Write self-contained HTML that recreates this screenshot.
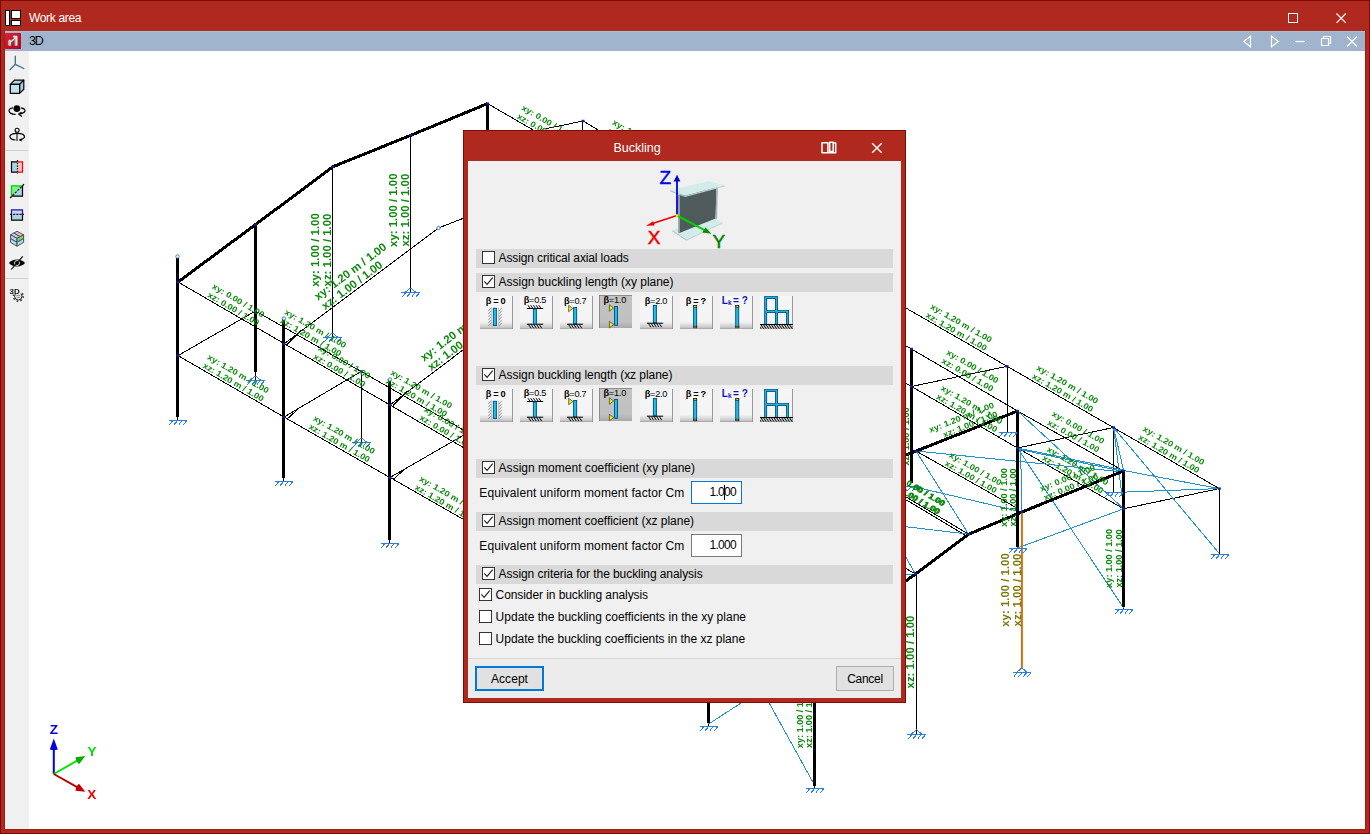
<!DOCTYPE html>
<html>
<head>
<meta charset="utf-8">
<title>Work area</title>
<style>
html,body{margin:0;padding:0;}
body{width:1370px;height:834px;position:relative;overflow:hidden;background:#b0291e;font-family:"Liberation Sans",sans-serif;font-size:12px;color:#000;}
.abs{position:absolute;}
#topedge{left:0;top:0;width:1370px;height:1px;background:#7a0c06;}
#title{left:29px;top:10px;color:#fff;font-size:12px;line-height:16px;white-space:nowrap;letter-spacing:-0.33px;}
#subbar{left:5px;top:31px;width:1360px;height:20px;background:#a0b5cd;}
#subbar .t{left:24px;top:3px;font-size:12.5px;line-height:14px;letter-spacing:-1.2px;}
#tool{left:5px;top:51px;width:24px;height:778px;background:#f0f0f0;}
#view{left:29px;top:51px;width:1336px;height:778px;background:#fff;overflow:hidden;}
#scene{left:0;top:0;will-change:transform;}
#dlg{left:463px;top:130px;width:443px;height:573px;background:#b0291f;box-sizing:border-box;border:1px solid #7e0c05;}
#dlgbody{left:468px;top:161px;width:433px;height:537px;background:#f0f0f0;}
#dlgtitle{left:463px;top:140px;width:348px;text-align:center;color:#fff;font-size:12.5px;line-height:16px;}
.band{left:8px;width:417px;height:19px;background:#d9d9d9;}
.cb{width:11px;height:11px;border:1px solid #333;background:#fff;}
.lbl{font-size:12px;line-height:15px;white-space:nowrap;color:#000;}
.inp{width:49px;height:21px;background:#fff;border:1px solid #7a7a7a;font-size:12px;line-height:21px;text-align:right;}
.btn{width:56px;height:23px;background:#e1e1e1;border:1px solid #adadad;font-size:12px;line-height:24px;text-align:center;}
</style>
</head>
<body>
<div class="abs" style="left:0;top:0;width:1370px;height:834px;box-sizing:border-box;border:1px solid #7d0400;border-top-color:#800a04"></div>
<div class="abs" style="left:4px;top:30px;width:1362px;height:800px;box-sizing:border-box;border:1px solid #a9190d;border-top-color:#b0291e"></div>
<!-- app icon -->
<svg class="abs" style="left:5px;top:9px" width="18" height="18" viewBox="0 0 18 18">
  <rect x="0.5" y="1.5" width="4" height="15" fill="#fff" stroke="#000"/>
  <rect x="6.500" y="1.500" width="9" height="8" fill="#fff" stroke="#000"/>
  <rect x="6.500" y="11.500" width="9" height="5" fill="#fff" stroke="#000"/>
</svg>
<div class="abs" id="title">Work area</div>
<!-- window buttons -->
<svg class="abs" style="left:1280px;top:8px" width="80" height="20" viewBox="0 0 80 20">
  <rect x="8.500" y="5.500" width="9" height="9" fill="none" stroke="#fff" stroke-width="1"/>
  <path d="M56.500 5.500L65.800 14.800M65.800 5.500L56.500 14.800" stroke="#fff" stroke-width="1.200" fill="none"/>
</svg>
<div class="abs" id="subbar">
  <div class="abs" style="left:0;top:0;width:1360px;height:1px;background:#a4c4de"></div>
  <div class="abs" style="left:0;top:19px;width:1360px;height:1px;background:#9db1cc"></div>
  <svg class="abs" style="left:0;top:2px" width="16" height="16" viewBox="0 0 16 16">
    <defs><linearGradient id="rg" x1="0" y1="0" x2="1" y2="1"><stop offset="0" stop-color="#d8243a"/><stop offset="0.500" stop-color="#cc1028"/><stop offset="1" stop-color="#a80c1e"/></linearGradient></defs>
    <rect x="0" y="0" width="16" height="16" rx="0.800" fill="url(#rg)"/>
    <path d="M3.400 7.400L4.800 6.400L6 7.600L9.200 5L7.600 3.200L9.600 2.200L10.400 3L11.800 2.600L12.600 3.400V12.400L10.600 13L9.800 12V6.400L6 9.400V12.400L4.600 13L3.200 11.800Z" fill="#e6e6e2" stroke="#8a8f8c" stroke-width="0.500"/>
    <path d="M9.800 6.400V12L10.600 13V5.600Z" fill="#a9aeab"/>
    <path d="M3.400 7.400L3.200 11.800L4.600 13V8.400Z" fill="#b4b8b5"/>
  </svg>
  <div class="abs t">3D</div>
  <svg class="abs" style="left:1230px;top:0" width="130" height="20" viewBox="1235 31 130 20" fill="none" stroke="#fff" stroke-width="1.200">
    <path d="M1250.500 36.300V46.700L1243.700 41.500Z"/>
    <path d="M1271.500 36.300V46.700L1278.300 41.500Z"/>
    <path d="M1295 41.500H1305"/>
    <path d="M1321.500 38.500H1328.500V45.500H1321.500ZM1323.500 38.500V36.500H1330.500V43.500H1328.500"/>
    <path d="M1347 36.500L1357 46.500M1357 36.500L1347 46.500"/>
  </svg>
</div>
<div class="abs" id="tool">
<svg class="abs" style="left:0;top:0;will-change:transform" width="24" height="260" viewBox="5 51 24 260">
<path d="M15.300 56.200V64.300L10 69.700M15.300 64.300L23.800 68.500" fill="none" stroke="#3e6f8b" stroke-width="1.300" stroke-linecap="round"/>
<g stroke="#000" stroke-width="1.200" stroke-linejoin="round">
<path d="M10.300 84.400L14.500 80.200H23.800L19.600 84.400Z" fill="#a9d6ea"/>
<path d="M19.600 84.400L23.800 80.200V89.300L19.600 93.400Z" fill="#9fd0e6"/>
<rect x="10.300" y="84.400" width="9.300" height="9" fill="#bfe0ec"/>
</g>
<path d="M13 107.900C10.500 108.300 9 109.600 9.100 110.900C9.300 113 12.500 114.300 15.700 114.500M21.100 107.900C23.500 108.400 25 109.600 25 110.900C24.900 112.600 22 113.600 18.400 114M18.400 114L21.600 112.200M18.400 114L22 116.600" fill="none" stroke="#000" stroke-width="1.200"/>
<circle cx="16.900" cy="108.600" r="3.400" fill="#000"/>
<circle cx="17.100" cy="130.300" r="2" fill="none" stroke="#000" stroke-width="1.100"/>
<line x1="17" y1="132.500" x2="17" y2="141" stroke="#555" stroke-width="1.600"/>
<path d="M19.500 139.900C27 138.800 26 133.300 17 133.300C8 133.300 7.500 139.300 15.500 140" fill="none" stroke="#000" stroke-width="1.200"/>
<path d="M18.800 139.900L21.600 138.200V141.400Z" fill="#000"/>
<line x1="5" y1="150.500" x2="28" y2="150.500" stroke="#cfcfcf" stroke-width="1"/>
<rect x="11.500" y="161.800" width="5.800" height="10.400" fill="#a8d4e8"/>
<rect x="17.500" y="161.800" width="5" height="10.400" fill="#ffc0c0"/>
<path d="M17.500 161.800H11.500V172.200H17.500" fill="none" stroke="#000" stroke-width="1.200"/>
<path d="M17.500 161.800H22.500V172.200H17.500" fill="none" stroke="#f00" stroke-width="1.200"/>
<line x1="17.500" y1="160" x2="17.500" y2="174" stroke="#000" stroke-width="1.200" stroke-dasharray="1.500 1.200"/>
<path d="M11.500 196.200V185.800H22.500Z" fill="#7ff08a"/>
<path d="M11.500 196.200H22.500V185.800Z" fill="#a8d4e8"/>
<path d="M11.500 196.200V185.800H22.500" fill="none" stroke="#00d000" stroke-width="1.200"/>
<path d="M11.500 196.200H22.500V185.800" fill="none" stroke="#000" stroke-width="1.200"/>
<line x1="10" y1="198" x2="24" y2="184.300" stroke="#000" stroke-width="1.200" stroke-dasharray="2.200 1.300"/>
<rect x="11.500" y="209.800" width="10.800" height="4.600" fill="#d2ccff"/>
<rect x="11.500" y="214.400" width="10.800" height="5.800" fill="#a8d4e8"/>
<path d="M11.500 214.400V209.800H22.500V214.400" fill="none" stroke="#1a1aa0" stroke-width="1.200"/>
<path d="M11.500 214.400V220.200H22.500V214.400" fill="none" stroke="#000" stroke-width="1.200"/>
<line x1="10" y1="214.400" x2="24" y2="214.400" stroke="#000" stroke-width="1.200" stroke-dasharray="2 1.200"/>
<g stroke="#3c464e" stroke-width="0.900" stroke-linejoin="round">
<path d="M13.750 233.050L20.300 236.600L17 238.400L10.500 234.800Z" fill="#a9dcee"/>
<path d="M17 231.300L23.600 234.800L20.300 236.600L13.750 233.050Z" fill="#f6b4bc"/>
<path d="M10.500 234.800V238.600L17 242.300V238.400Z" fill="#cfc6f2"/>
<path d="M17 238.400V242.300L23.600 238.600V234.800Z" fill="#7fd468"/>
<path d="M10.500 238.600V242.400L17 246.200V242.300Z" fill="#a9dcee"/>
<path d="M17 242.300V246.200L23.600 242.400V238.600Z" fill="#a9dcee"/>
</g>
<path d="M9 263C12 258.200 21.800 258.200 25 263C21.800 267.600 12 267.600 9 263Z" fill="#000"/>
<circle cx="17" cy="263" r="2.500" fill="none" stroke="#f0f0f0" stroke-width="0.900"/>
<line x1="11.200" y1="269.500" x2="22.800" y2="256.400" stroke="#000" stroke-width="1.100"/>
<line x1="5" y1="278.500" x2="28" y2="278.500" stroke="#cfcfcf" stroke-width="1"/>
<text x="9.600" y="293.600" font-family="Liberation Sans, sans-serif" font-weight="bold" font-size="8" fill="#111">3D</text>
<clipPath id="gc"><path d="M5 294.200H20.800V288H29V306H5Z"/></clipPath>
<g clip-path="url(#gc)" fill="none" stroke="#222">
<circle cx="18.300" cy="296.300" r="3.700" stroke-width="1"/>
<circle cx="18.300" cy="296.300" r="4.900" stroke-width="1.500" stroke-dasharray="1.500 2.350"/>
</g>
<path d="M16.300 296L18.300 295.200L20.400 296M16.800 297.400H19.800" fill="none" stroke="#666" stroke-width="0.800"/>
</svg>

</div>
<div class="abs" id="view">
<svg class="abs" id="scene" width="1336" height="778" viewBox="29 51 1336 778">
<g fill="none" stroke="#000" stroke-width="1" shape-rendering="crispEdges">
<polyline points="178.0,282.0 470.0,451.4"/>
<polyline points="255.5,311.0 470.0,433.8"/>
<polyline points="178.0,355.6 284.0,417.0 390.0,477.5 470.0,523.2"/>
<polyline points="178.0,355.6 255.5,311.0"/>
<polyline points="284.0,417.0 361.3,371.4"/>
<polyline points="390.0,477.5 470.0,431.5"/>
<polyline points="284.0,344.0 438.5,228.0 470.0,215.7"/>
<polyline points="390.0,405.0 470.0,344.7"/>
<polyline points="332.5,167.0 332.5,337.0"/>
<polyline points="410.5,135.0 410.5,292.0"/>
<polyline points="361.5,371.4 361.5,442.0"/>
<polyline points="255.5,372.0 255.5,380.0"/>
<polyline points="177.5,417.0 177.5,420.5"/>
<polyline points="283.5,478.0 283.5,481.5"/>
<polyline points="389.5,540.0 389.5,543.5"/>
<polyline points="487.6,103.6 540.0,134.0"/>
<polyline points="545.6,128.8 583.0,121.0 600.0,131.0"/>
<polyline points="582.5,121.0 582.5,132.0"/>
<polyline points="900.0,304.6 1219.3,488.6"/>
<polyline points="900.0,342.3 911.5,349.0 1017.5,411.0 1123.6,471.0"/>
<polyline points="900.0,379.8 911.5,386.5 1017.5,448.0 1123.6,508.8"/>
<polyline points="911.5,386.5 1007.0,366.3"/>
<polyline points="1007.5,366.3 1007.5,432.5"/>
<polyline points="1017.5,448.0 1113.6,427.5"/>
<polyline points="1113.5,427.5 1113.5,492.5"/>
<polyline points="1123.6,508.8 1219.3,488.6"/>
<polyline points="1219.5,488.6 1219.5,554.4"/>
<polyline points="916.0,451.0 1017.5,508.4"/>
<polyline points="900.0,493.4 968.6,534.2"/>
<polyline points="900.0,496.2 966.0,535.6"/>
<polyline points="916.5,575.0 916.5,734.0"/>
<polyline points="393.0,405.7 407.0,391.7"/>
<polyline points="287.0,344.7 301.0,330.7"/>
<polyline points="287.3,418.8 298.0,409.3"/>
<polyline points="393.3,479.3 404.0,469.8"/>
<polyline points="900.0,565.0 915.4,574.0"/>
<polyline points="1017.5,546.5 1017.5,548.7"/>
<polyline points="1123.5,607.0 1123.5,609.5"/>
<polyline points="708.5,723.0 708.5,726.5"/>
<polyline points="814.5,785.0 814.5,788.4"/>
</g>
<g fill="none" stroke="#1d93d2" stroke-width="1" shape-rendering="crispEdges">
<polyline points="916.0,451.0 1123.6,472.0"/>
<polyline points="916.0,451.0 968.6,534.2"/>
<polyline points="1017.5,411.0 1123.6,508.8"/>
<polyline points="1017.5,448.0 1123.6,470.0"/>
<polyline points="1017.5,449.0 1123.6,471.5"/>
<polyline points="1017.5,448.0 1123.6,608.0"/>
<polyline points="1020.6,448.0 1021.9,512.0"/>
<polyline points="1113.6,427.5 1123.6,470.5"/>
<polyline points="1113.6,427.5 1123.6,508.8"/>
<polyline points="1113.6,427.5 1219.3,553.5"/>
<polyline points="1123.6,470.5 1219.3,488.6"/>
<polyline points="1219.3,488.6 1113.8,492.5"/>
<polyline points="1123.6,508.8 1017.5,548.0"/>
<polyline points="911.0,486.0 1017.5,511.0"/>
<polyline points="900.0,526.0 968.6,534.2"/>
<polyline points="900.0,546.8 915.4,574.0"/>
<polyline points="900.0,574.0 915.4,574.0"/>
<polyline points="708.6,724.0 745.0,700.5"/>
<polyline points="767.5,700.0 814.5,785.0"/>
</g>
<g fill="none" stroke="#000" stroke-width="3" stroke-linejoin="round" shape-rendering="crispEdges">
<polyline points="177.5,258.0 177.5,417.0"/>
<polyline points="178.0,282.0 255.5,224.6 332.8,166.8 411.0,135.2 487.6,103.6"/>
<polyline points="255.5,225.0 255.5,372.0"/>
<polyline points="283.5,320.0 283.5,478.0"/>
<polyline points="389.5,381.0 389.5,540.0"/>
<polyline points="487.5,104.0 487.5,131.0"/>
<polyline points="911.5,349.0 911.5,482.6"/>
<polyline points="900.0,457.4 1017.5,411.0"/>
<polyline points="1017.5,411.0 1017.5,546.5"/>
<polyline points="1123.6,471.0 1021.9,512.0 968.6,534.2 915.4,574.0 900.0,585.4"/>
<polyline points="1123.5,471.0 1123.5,607.0"/>
<polyline points="708.5,700.0 708.5,723.0"/>
<polyline points="814.5,700.0 814.5,785.6"/>
</g>
<line x1="1021.9" y1="512" x2="1021.9" y2="668" stroke="#d2700f" stroke-width="2"/>
<g fill="none" stroke="#2a7fe0" stroke-width="1" shape-rendering="crispEdges">
<path d="M168.5 420.5H187.0M173.0 420.5l-3.6 4.2M177.7 420.5l-3.6 4.2M182.4 420.5l-3.6 4.2M187.0 420.5l-3.6 4.2"/>
<path d="M274.5 481.5H293.0M279.0 481.5l-3.6 4.2M283.7 481.5l-3.6 4.2M288.4 481.5l-3.6 4.2M293.0 481.5l-3.6 4.2"/>
<path d="M380.5 543.5H399.0M385.0 543.5l-3.6 4.2M389.7 543.5l-3.6 4.2M394.4 543.5l-3.6 4.2M399.0 543.5l-3.6 4.2"/>
<path d="M1008.5 548.5H1027.0M1013.0 548.5l-3.6 4.2M1017.7 548.5l-3.6 4.2M1022.4 548.5l-3.6 4.2M1027.0 548.5l-3.6 4.2"/>
<path d="M1210.5 554.5H1229.0M1215.0 554.5l-3.6 4.2M1219.7 554.5l-3.6 4.2M1224.4 554.5l-3.6 4.2M1229.0 554.5l-3.6 4.2"/>
<path d="M1114.5 609.5H1133.0M1119.0 609.5l-3.6 4.2M1123.7 609.5l-3.6 4.2M1128.4 609.5l-3.6 4.2M1133.0 609.5l-3.6 4.2"/>
<path d="M699.5 726.5H718.0M704.0 726.5l-3.6 4.2M708.7 726.5l-3.6 4.2M713.4 726.5l-3.6 4.2M718.0 726.5l-3.6 4.2"/>
<path d="M805.5 788.5H824.0M810.0 788.5l-3.6 4.2M814.7 788.5l-3.6 4.2M819.4 788.5l-3.6 4.2M824.0 788.5l-3.6 4.2"/>
<path d="M998.5 432.5H1017.0M1003.0 432.5l-3.6 4.2M1007.7 432.5l-3.6 4.2M1012.4 432.5l-3.6 4.2M1017.0 432.5l-3.6 4.2"/>
<path d="M1104.5 492.5H1123.0M1109.0 492.5l-3.6 4.2M1113.7 492.5l-3.6 4.2M1118.4 492.5l-3.6 4.2M1123.0 492.5l-3.6 4.2"/>
<path d="M902.0 486.5H920.5M906.5 486.5l-3.6 4.2M911.2 486.5l-3.6 4.2M915.9 486.5l-3.6 4.2M920.5 486.5l-3.6 4.2"/>
<path d="M255.5 376.0L250.0 380.5M255.5 376.0L261.0 380.5M246.3 380.5H264.7M251.0 380.5l-3.6 4.2M255.7 380.5l-3.6 4.2M260.4 380.5l-3.6 4.2M264.7 380.5l-3.6 4.2"/>
<path d="M332.5 333.0L327.0 337.5M332.5 333.0L338.0 337.5M323.3 337.5H341.7M328.0 337.5l-3.6 4.2M332.7 337.5l-3.6 4.2M337.4 337.5l-3.6 4.2M341.7 337.5l-3.6 4.2"/>
<path d="M410.5 288.0L405.0 292.5M410.5 288.0L416.0 292.5M401.3 292.5H419.7M406.0 292.5l-3.6 4.2M410.7 292.5l-3.6 4.2M415.4 292.5l-3.6 4.2M419.7 292.5l-3.6 4.2"/>
<path d="M361.5 438.0L356.0 442.5M361.5 438.0L367.0 442.5M352.3 442.5H370.7M357.0 442.5l-3.6 4.2M361.7 442.5l-3.6 4.2M366.4 442.5l-3.6 4.2M370.7 442.5l-3.6 4.2"/>
<path d="M916.5 729.5L911.0 734.5M916.5 729.5L922.0 734.5M907.3 734.5H925.7M912.0 734.5l-3.6 4.2M916.7 734.5l-3.6 4.2M921.4 734.5l-3.6 4.2M925.7 734.5l-3.6 4.2"/>
<path d="M1021.9 668.0L1016.4 672.5M1021.9 668.0L1027.4 672.5M1012.7 672.5H1031.1M1017.4 672.5l-3.6 4.2M1022.1 672.5l-3.6 4.2M1026.8 672.5l-3.6 4.2M1031.1 672.5l-3.6 4.2"/>
</g>
<g fill="#10209a">
<rect x="176.5" y="280.8" width="3" height="2.4"/>
<rect x="176.5" y="354.4" width="3" height="2.4"/>
<rect x="254.0" y="223.4" width="3" height="2.4"/>
<rect x="331.3" y="165.6" width="3" height="2.4"/>
<rect x="409.5" y="134.0" width="3" height="2.4"/>
<rect x="486.1" y="102.4" width="3" height="2.4"/>
<rect x="254.0" y="309.8" width="3" height="2.4"/>
<rect x="282.5" y="342.8" width="3" height="2.4"/>
<rect x="282.5" y="415.8" width="3" height="2.4"/>
<rect x="388.5" y="403.8" width="3" height="2.4"/>
<rect x="388.5" y="476.3" width="3" height="2.4"/>
<rect x="359.8" y="370.2" width="3" height="2.4"/>
<rect x="581.5" y="119.8" width="3" height="2.4"/>
<rect x="910.0" y="347.8" width="3" height="2.4"/>
<rect x="910.0" y="385.3" width="3" height="2.4"/>
<rect x="1005.5" y="365.1" width="3" height="2.4"/>
<rect x="1016.0" y="409.8" width="3" height="2.4"/>
<rect x="1016.0" y="446.8" width="3" height="2.4"/>
<rect x="1112.1" y="426.3" width="3" height="2.4"/>
<rect x="1122.1" y="469.8" width="3" height="2.4"/>
<rect x="1122.1" y="507.6" width="3" height="2.4"/>
<rect x="1217.8" y="487.4" width="3" height="2.4"/>
<rect x="914.5" y="449.8" width="3" height="2.4"/>
<rect x="967.1" y="533.0" width="3" height="2.4"/>
<rect x="913.9" y="572.8" width="3" height="2.4"/>
<rect x="1020.4" y="510.8" width="3" height="2.4"/>
</g>
<g fill="#fff" stroke="#2a6fd8" stroke-width="0.9">
<circle cx="177.5" cy="256.5" r="1.7"/>
<circle cx="284.0" cy="318.5" r="1.7"/>
<circle cx="390.0" cy="379.5" r="1.7"/>
<circle cx="438.5" cy="228.0" r="1.7"/>
</g>
<g font-family="Liberation Sans, sans-serif" font-weight="bold" font-size="11.4" text-anchor="middle">
<text fill="#0a8a0a" transform="translate(238.4 300.4) rotate(30.3) scale(0.800 0.720)" y="4">xy: 0.00 / 1.00</text>
<text fill="#0a8a0a" transform="translate(233.5 308.7) rotate(30.3) scale(0.800 0.720)" y="4">xz: 0.00 / 1.00</text>
<text fill="#0a8a0a" transform="translate(344.3 361.8) rotate(29.9) scale(0.800 0.720)" y="4">xy: 0.00 / 1.00</text>
<text fill="#0a8a0a" transform="translate(339.5 370.2) rotate(29.9) scale(0.800 0.720)" y="4">xz: 0.00 / 1.00</text>
<text fill="#0a8a0a" transform="translate(450.3 423.1) rotate(30.1) scale(0.800 0.720)" y="4">xy: 0.00 / 1.00</text>
<text fill="#0a8a0a" transform="translate(445.5 431.4) rotate(30.1) scale(0.800 0.720)" y="4">xz: 0.00 / 1.00</text>
<text fill="#0a8a0a" transform="translate(315.6 328.5) rotate(29.7) scale(0.800 0.720)" y="4">xy: 1.20 m / 1.00</text>
<text fill="#0a8a0a" transform="translate(310.9 336.9) rotate(29.7) scale(0.800 0.720)" y="4">xz: 1.20 m / 1.00</text>
<text fill="#0a8a0a" transform="translate(421.4 389.0) rotate(29.8) scale(0.800 0.720)" y="4">xy: 1.20 m / 1.00</text>
<text fill="#0a8a0a" transform="translate(416.6 397.4) rotate(29.8) scale(0.800 0.720)" y="4">xz: 1.20 m / 1.00</text>
<text fill="#0a8a0a" transform="translate(238.3 373.7) rotate(30.1) scale(0.800 0.720)" y="4">xy: 1.20 m / 1.00</text>
<text fill="#0a8a0a" transform="translate(233.5 382.0) rotate(30.1) scale(0.800 0.720)" y="4">xz: 1.20 m / 1.00</text>
<text fill="#0a8a0a" transform="translate(344.2 434.6) rotate(29.7) scale(0.800 0.720)" y="4">xy: 1.20 m / 1.00</text>
<text fill="#0a8a0a" transform="translate(339.5 442.9) rotate(29.7) scale(0.800 0.720)" y="4">xz: 1.20 m / 1.00</text>
<text fill="#0a8a0a" transform="translate(450.3 495.3) rotate(29.9) scale(0.800 0.720)" y="4">xy: 1.20 m / 1.00</text>
<text fill="#0a8a0a" transform="translate(445.5 503.7) rotate(29.9) scale(0.800 0.720)" y="4">xz: 1.20 m / 1.00</text>
<text fill="#0a8a0a" transform="translate(350.3 271.4) rotate(-36.9) scale(1.000 1.000)" y="4">xy: 1.20 m / 1.00</text>
<text fill="#0a8a0a" transform="translate(351.9 285.1) rotate(-36.9) scale(1.000 1.000)" y="4">xz: 1.00 / 1.00</text>
<text fill="#0a8a0a" transform="translate(456.3 332.5) rotate(-36.9) scale(1.000 1.000)" y="4">xy: 1.20 m / 1.00</text>
<text fill="#0a8a0a" transform="translate(457.9 346.2) rotate(-36.9) scale(1.000 1.000)" y="4">xz: 1.00 / 1.00</text>
<text fill="#0a8a0a" transform="translate(314.5 250.0) rotate(-90.0) scale(1.000 1.000)" y="4">xy: 1.00 / 1.00</text>
<text fill="#0a8a0a" transform="translate(326.5 250.0) rotate(-90.0) scale(1.000 1.000)" y="4">xz: 1.00 / 1.00</text>
<text fill="#0a8a0a" transform="translate(392.7 210.2) rotate(-90.0) scale(1.000 1.000)" y="4">xy: 1.00 / 1.00</text>
<text fill="#0a8a0a" transform="translate(404.7 210.2) rotate(-90.0) scale(1.000 1.000)" y="4">xz: 1.00 / 1.00</text>
<text fill="#0a8a0a" transform="translate(547.9 121.7) rotate(30.1) scale(0.800 0.720)" y="4">xy: 0.00 / 1.00</text>
<text fill="#0a8a0a" transform="translate(543.1 130.0) rotate(30.1) scale(0.800 0.720)" y="4">xz: 0.00 / 1.00</text>
<text fill="#0a8a0a" transform="translate(643.3 138.8) rotate(29.9) scale(0.800 0.720)" y="4">xy: 1.20 m / 1.00</text>
<text fill="#0a8a0a" transform="translate(638.5 147.2) rotate(29.9) scale(0.800 0.720)" y="4">xz: 1.20 m / 1.00</text>
<text fill="#0a8a0a" transform="translate(961.3 323.1) rotate(29.9) scale(0.800 0.720)" y="4">xy: 1.20 m / 1.00</text>
<text fill="#0a8a0a" transform="translate(956.5 331.5) rotate(29.9) scale(0.800 0.720)" y="4">xz: 1.20 m / 1.00</text>
<text fill="#0a8a0a" transform="translate(1067.6 384.2) rotate(29.9) scale(0.800 0.720)" y="4">xy: 1.20 m / 1.00</text>
<text fill="#0a8a0a" transform="translate(1062.8 392.6) rotate(29.9) scale(0.800 0.720)" y="4">xz: 1.20 m / 1.00</text>
<text fill="#0a8a0a" transform="translate(1173.8 445.4) rotate(30.0) scale(0.800 0.720)" y="4">xy: 1.20 m / 1.00</text>
<text fill="#0a8a0a" transform="translate(1169.0 453.7) rotate(30.0) scale(0.800 0.720)" y="4">xz: 1.20 m / 1.00</text>
<text fill="#0a8a0a" transform="translate(972.6 366.2) rotate(30.3) scale(0.800 0.720)" y="4">xy: 0.00 / 1.00</text>
<text fill="#0a8a0a" transform="translate(967.6 374.6) rotate(30.3) scale(0.800 0.720)" y="4">xz: 0.00 / 1.00</text>
<text fill="#0a8a0a" transform="translate(1078.2 427.4) rotate(29.5) scale(0.800 0.720)" y="4">xy: 0.00 / 1.00</text>
<text fill="#0a8a0a" transform="translate(1073.4 436.0) rotate(29.5) scale(0.800 0.720)" y="4">xz: 0.00 / 1.00</text>
<text fill="#0a8a0a" transform="translate(971.8 404.6) rotate(30.1) scale(0.800 0.720)" y="4">xy: 1.20 m / 1.00</text>
<text fill="#0a8a0a" transform="translate(967.0 412.9) rotate(30.1) scale(0.800 0.720)" y="4">xz: 1.20 m / 1.00</text>
<text fill="#0a8a0a" transform="translate(1077.8 465.7) rotate(29.8) scale(0.800 0.720)" y="4">xy: 1.20 m / 1.00</text>
<text fill="#0a8a0a" transform="translate(1073.0 474.1) rotate(29.8) scale(0.800 0.720)" y="4">xz: 1.20 m / 1.00</text>
<text fill="#0a8a0a" transform="translate(961.5 417.4) rotate(-21.5) scale(0.800 0.720)" y="4">xy: 1.20 m / 1.00</text>
<text fill="#0a8a0a" transform="translate(970.2 424.3) rotate(-21.5) scale(0.800 0.720)" y="4">xz: 1.00 / 1.00</text>
<text fill="#0a8a0a" transform="translate(1067.3 478.0) rotate(-22.0) scale(0.800 0.720)" y="4">xy: 0.00 / 1.00</text>
<text fill="#0a8a0a" transform="translate(1070.9 486.9) rotate(-22.0) scale(0.800 0.720)" y="4">xz: 0.00 / 1.00</text>
<text fill="#0a8a0a" transform="translate(975.5 468.7) rotate(29.5) scale(0.800 0.720)" y="4">xy: 1.00 / 1.00</text>
<text fill="#0a8a0a" transform="translate(971.0 476.7) rotate(29.5) scale(0.800 0.720)" y="4">xz: 1.00 / 1.00</text>
<text fill="#0a8a0a" transform="translate(918.7 489.0) rotate(30.7) scale(0.800 0.720)" y="4">xy: 0.00 / 1.00</text>
<text fill="#0a8a0a" transform="translate(913.8 497.3) rotate(30.7) scale(0.800 0.720)" y="4">xz: 0.00 / 1.00</text>
<text fill="#0a8a0a" transform="translate(919.7 489.2) rotate(30.7) scale(0.800 0.720)" y="4">xy: 1.00 / 1.00</text>
<text fill="#0a8a0a" transform="translate(914.8 497.5) rotate(30.7) scale(0.800 0.720)" y="4">xz: 1.00 / 1.00</text>
<text fill="#0a8a0a" transform="translate(896.9 436.4) rotate(-90.0) scale(0.800 0.720)" y="4">xy: 1.00 / 1.00</text>
<text fill="#0a8a0a" transform="translate(906.5 436.4) rotate(-90.0) scale(0.800 0.720)" y="4">xz: 1.00 / 1.00</text>
<text fill="#0a8a0a" transform="translate(1004.3 497.5) rotate(-90.0) scale(0.800 0.720)" y="4">xy: 1.00 / 1.00</text>
<text fill="#0a8a0a" transform="translate(1012.7 497.5) rotate(-90.0) scale(0.800 0.720)" y="4">xz: 1.00 / 1.00</text>
<text fill="#0a8a0a" transform="translate(1109.4 558.4) rotate(-90.0) scale(0.800 0.720)" y="4">xy: 1.00 / 1.00</text>
<text fill="#0a8a0a" transform="translate(1118.8 558.4) rotate(-90.0) scale(0.800 0.720)" y="4">xz: 1.00 / 1.00</text>
<text fill="#7a7a0a" transform="translate(1004.5 590.0) rotate(-90.0) scale(1.000 1.000)" y="4">xy: 1.00 / 1.00</text>
<text fill="#7a7a0a" transform="translate(1016.5 590.0) rotate(-90.0) scale(1.000 1.000)" y="4">xz: 1.00 / 1.00</text>
<text fill="#0a8a0a" transform="translate(897.5 652.0) rotate(-90.0) scale(1.000 1.000)" y="4">xy: 1.00 / 1.00</text>
<text fill="#0a8a0a" transform="translate(909.5 652.0) rotate(-90.0) scale(1.000 1.000)" y="4">xz: 1.00 / 1.00</text>
<text fill="#0a8a0a" transform="translate(800.5 718.8) rotate(-90.0) scale(0.800 0.720)" y="4">xy: 1.00 / 1.00</text>
<text fill="#0a8a0a" transform="translate(809.6 718.8) rotate(-90.0) scale(0.800 0.720)" y="4">xz: 1.00 / 1.00</text>
</g>
<g>
<line x1="53.8" y1="774" x2="53.8" y2="746" stroke="#0000f0" stroke-width="2"/>
<path d="M53.8 738.500L49.800 749.500Q53.800 751 57.800 749.500Z" fill="#0000e0"/>
<line x1="53.8" y1="774" x2="78" y2="760.2" stroke="#00e800" stroke-width="2"/>
<path d="M85.300 756L75.500 757.300Q75.500 761 79 764.300Z" fill="#00b000"/>
<line x1="53.8" y1="774" x2="78" y2="787.6" stroke="#b80000" stroke-width="2"/>
<path d="M85.300 791.800L79 783.800Q76 786 75.500 790.800Z" fill="#c00000"/>
<g font-family="Liberation Sans, sans-serif" font-weight="bold" font-size="13.5">
<text x="49.800" y="733.800" fill="#0000f0">Z</text>
<text x="87.500" y="755.500" fill="#00e000">Y</text>
<text x="87.300" y="799.200" fill="#f00000">X</text>
</g></g>
</svg>
</div>
<!-- dialog -->
<div class="abs" id="dlg"></div>
<div class="abs" id="dlgtitle">Buckling</div>
<svg class="abs" style="left:816px;top:138px" width="72" height="20" viewBox="816 138 72 20" fill="none" stroke="#fff">
  <path d="M822 142.700H827.900V152.700H822ZM829.700 142.200H833.200V151.500H829.700ZM833.200 142.900H835.700V152.800H827.900" stroke-width="1.500" stroke-linejoin="round"/>
  <path d="M872.200 143.300L881.700 152.800M881.700 143.300L872.200 152.800" stroke-width="1.400"/>
</svg>
<div class="abs" id="dlgbody">
<svg class="abs" style="left:172px;top:4px" width="90" height="86" viewBox="640 165 90 86">
<polygon points="672.200,230.200 678.500,227.500 715.500,218.600 722.300,222.400 686.500,239.600" fill="#d2ecec"/>
<polygon points="672.200,230.200 686.500,239.600 686.500,240.800 672.200,231.300" fill="#a8c4c4"/>
<polygon points="686.500,239.600 722.300,222.400 722.300,223.500 686.500,240.800" fill="#b8d2d2"/>
<polygon points="678.300,195 716.500,187.500 715.500,218.600 678.800,233.200" fill="#4f5a5a"/>
<polygon points="716.500,187.500 718,188 717,219.200 715.500,218.600" fill="#9fb5b5"/>
<polygon points="678.300,195 680,195 680,232.600 678.300,233.200" fill="#8fa3a3"/>
<polygon points="670.200,190.300 709.400,181.100 724.600,185.400 685,195.800" fill="#d2ecec"/>
<polygon points="670.200,190.300 685,195.800 685,197 670.200,191.400" fill="#a8c4c4"/>
<polygon points="685,195.800 724.600,185.400 724.600,186.500 685,197" fill="#b8d2d2"/>
<line x1="677" y1="215.500" x2="677" y2="180" stroke="#0000e6" stroke-width="1.800"/>
<path d="M677 174.800L673.600 181.600H680.400Z" fill="#0000c8"/>
<line x1="677" y1="215.500" x2="651" y2="224.100" stroke="#f00000" stroke-width="1.600"/>
<path d="M646 225.800L653.300 221.200L654.600 225.600Z" fill="#f00000"/>
<line x1="677" y1="215.500" x2="705" y2="230.300" stroke="#00d000" stroke-width="2"/>
<path d="M711.500 233.800L702.300 232.600L705.500 227.600Z" fill="#009000"/>
<rect x="675.800" y="214.300" width="2.400" height="2.400" fill="#ffef00"/>
<g font-family="Liberation Sans, sans-serif" font-size="19" stroke-width="0.450">
<text x="659.600" y="183.900" fill="#0000f0" stroke="#0000f0">Z</text>
<text x="647.800" y="244" fill="#f00000" stroke="#f00000">X</text>
<text x="712.600" y="247.700" fill="#008000" stroke="#008000">Y</text>
</g>
</svg>
<div class="abs band" style="top:88px"></div>
<div class="abs cb" style="left:14px;top:90px"></div>
<div class="abs lbl" style="left:30.6px;top:89.5px;letter-spacing:-0.122px;">Assign critical axial loads</div>
<div class="abs band" style="top:112px"></div>
<div class="abs cb" style="left:14px;top:114px"><svg width="11" height="11" viewBox="0 0 11 11" style="display:block"><path d="M1.300 5.400L4.100 8.300L9.700 1.700" fill="none" stroke="#222" stroke-width="1.150"/></svg></div>
<div class="abs lbl" style="left:30.6px;top:113.5px;letter-spacing:-0.016px;">Assign buckling length (xy plane)</div>
<div class="abs band" style="top:205px"></div>
<div class="abs cb" style="left:14px;top:207px"><svg width="11" height="11" viewBox="0 0 11 11" style="display:block"><path d="M1.300 5.400L4.100 8.300L9.700 1.700" fill="none" stroke="#222" stroke-width="1.150"/></svg></div>
<div class="abs lbl" style="left:30.6px;top:206.5px;letter-spacing:-0.050px;">Assign buckling length (xz plane)</div>
<div class="abs band" style="top:298px"></div>
<div class="abs cb" style="left:14px;top:300px"><svg width="11" height="11" viewBox="0 0 11 11" style="display:block"><path d="M1.300 5.400L4.100 8.300L9.700 1.700" fill="none" stroke="#222" stroke-width="1.150"/></svg></div>
<div class="abs lbl" style="left:30.6px;top:299.5px;letter-spacing:0.017px;">Assign moment coefficient (xy plane)</div>
<div class="abs band" style="top:351px"></div>
<div class="abs cb" style="left:14px;top:353px"><svg width="11" height="11" viewBox="0 0 11 11" style="display:block"><path d="M1.300 5.400L4.100 8.300L9.700 1.700" fill="none" stroke="#222" stroke-width="1.150"/></svg></div>
<div class="abs lbl" style="left:30.6px;top:352.5px;letter-spacing:-0.011px;">Assign moment coefficient (xz plane)</div>
<div class="abs band" style="top:404px"></div>
<div class="abs cb" style="left:14px;top:406px"><svg width="11" height="11" viewBox="0 0 11 11" style="display:block"><path d="M1.300 5.400L4.100 8.300L9.700 1.700" fill="none" stroke="#222" stroke-width="1.150"/></svg></div>
<div class="abs lbl" style="left:30.6px;top:405.5px;letter-spacing:-0.068px;">Assign criteria for the buckling analysis</div>
<div class="abs" style="left:12px;top:135px;background:linear-gradient(#f6f6f6 0,#f4f4f4 78%,#c9c9c9 95%,#9d9d9d 100%);border-right:1px solid #9a9a9a;width:32px;height:33px;"><svg class="abs" style="left:0;top:0" width="33" height="33" viewBox="0 0 33 33"><text x="5.8" y="7.9" font-size="9.200" fill="#000" font-family="Liberation Sans, sans-serif"><tspan font-weight="bold" letter-spacing="-0.350">β = 0</tspan></text><rect x="13.4" y="12.3" width="3.0" height="17.2" fill="#1fc3d6" stroke="#0d4fa0" stroke-width="1"/><path d="M11.2 11.8l-2.8 3.2M21.8 11.8l-2.8 3.2M11.2 14.8l-2.8 3.2M21.8 14.8l-2.8 3.2M11.2 17.8l-2.8 3.2M21.8 17.8l-2.8 3.2M11.2 20.8l-2.8 3.2M21.8 20.8l-2.8 3.2M11.2 23.8l-2.8 3.2M21.8 23.8l-2.8 3.2M11.2 26.8l-2.8 3.2M21.8 26.8l-2.8 3.2" stroke="#8a8a8a" stroke-width="0.900" fill="none"/><path d="M11.6 11.500V30.500M18.600 11.500V30.500" stroke="#b8b8b8" stroke-width="0.800" fill="none"/></svg></div>
<div class="abs" style="left:52px;top:135px;background:linear-gradient(#f6f6f6 0,#f4f4f4 78%,#c9c9c9 95%,#9d9d9d 100%);border-right:1px solid #9a9a9a;width:32px;height:33px;"><svg class="abs" style="left:0;top:0" width="33" height="33" viewBox="0 0 33 33"><text x="3.8" y="7.2" font-size="9.200" fill="#000" font-family="Liberation Sans, sans-serif"><tspan font-weight="bold" letter-spacing="-0.350">β</tspan><tspan font-weight="normal" letter-spacing="-0.250">=0.5</tspan></text><path d="M8.0 9.2l2.0 3.0M10.7 9.2l2.0 3.0M13.4 9.2l2.0 3.0M16.1 9.2l2.0 3.0M18.8 9.2l2.0 3.0" stroke="#000" stroke-width="1" fill="none"/><path d="M6.800 12.500H23.200M6.800 28.200H23.200" stroke="#000" stroke-width="1"/><rect x="13.4" y="13.0" width="3.0" height="15.0" fill="#1fc3d6" stroke="#0d4fa0" stroke-width="1"/><path d="M8.5 28.4l2.4 3.8M11.2 28.4l2.4 3.8M13.9 28.4l2.4 3.8M16.6 28.4l2.4 3.8M19.3 28.4l2.4 3.8" stroke="#000" stroke-width="1" fill="none"/></svg></div>
<div class="abs" style="left:92px;top:135px;background:linear-gradient(#f6f6f6 0,#f4f4f4 78%,#c9c9c9 95%,#9d9d9d 100%);border-right:1px solid #9a9a9a;width:32px;height:33px;"><svg class="abs" style="left:0;top:0" width="33" height="33" viewBox="0 0 33 33"><text x="4.0" y="7.8" font-size="9.200" fill="#000" font-family="Liberation Sans, sans-serif"><tspan font-weight="bold" letter-spacing="-0.350">β</tspan><tspan font-weight="normal" letter-spacing="-0.250">=0.7</tspan></text><path d="M8.6 9.3L12.8 12.5L8.6 15.7Z" fill="#f5ee00" stroke="#222" stroke-width="0.600"/><rect x="13.6" y="11.5" width="3.0" height="16.5" fill="#1fc3d6" stroke="#0d4fa0" stroke-width="1"/><path d="M7 28.200H23" stroke="#000" stroke-width="1"/><path d="M8.5 28.4l2.4 3.8M11.2 28.4l2.4 3.8M13.9 28.4l2.4 3.8M16.6 28.4l2.4 3.8M19.3 28.4l2.4 3.8" stroke="#000" stroke-width="1" fill="none"/></svg></div>
<div class="abs" style="left:131px;top:134px;background:linear-gradient(#c3c3c3 0,#c0c0c0 80%,#a9a9a9 100%);border-left:1px solid #8c8c8c;border-top:1px solid #8c8c8c;width:32px;height:32px;"><svg class="abs" style="left:0;top:0" width="33" height="33" viewBox="1 1 33 33"><text x="4.6" y="7.6" font-size="9.200" fill="#000" font-family="Liberation Sans, sans-serif"><tspan font-weight="bold" letter-spacing="-0.350">β</tspan><tspan font-weight="normal" letter-spacing="-0.250">=1.0</tspan></text><path d="M10.4 9.8L14.6 13.0L10.4 16.2Z" fill="#f5ee00" stroke="#222" stroke-width="0.600"/><path d="M10.4 26.4L14.6 29.6L10.4 32.8Z" fill="#f5ee00" stroke="#222" stroke-width="0.600"/><rect x="15.5" y="11.5" width="3.0" height="18.7" fill="#1fc3d6" stroke="#0d4fa0" stroke-width="1"/></svg></div>
<div class="abs" style="left:172px;top:135px;background:linear-gradient(#f6f6f6 0,#f4f4f4 78%,#c9c9c9 95%,#9d9d9d 100%);border-right:1px solid #9a9a9a;width:32px;height:33px;"><svg class="abs" style="left:0;top:0" width="33" height="33" viewBox="0 0 33 33"><text x="4.8" y="7.8" font-size="9.200" fill="#000" font-family="Liberation Sans, sans-serif"><tspan font-weight="bold" letter-spacing="-0.350">β</tspan><tspan font-weight="normal" letter-spacing="-0.250">=2.0</tspan></text><rect x="13.4" y="9.5" width="3.0" height="17.5" fill="#1fc3d6" stroke="#0d4fa0" stroke-width="1"/><path d="M6.800 27.200H23.200" stroke="#000" stroke-width="1"/><path d="M8.5 27.4l2.4 3.8M11.2 27.4l2.4 3.8M13.9 27.4l2.4 3.8M16.6 27.4l2.4 3.8M19.3 27.4l2.4 3.8" stroke="#000" stroke-width="1" fill="none"/></svg></div>
<div class="abs" style="left:212px;top:135px;background:linear-gradient(#f6f6f6 0,#f4f4f4 78%,#c9c9c9 95%,#9d9d9d 100%);border-right:1px solid #9a9a9a;width:32px;height:33px;"><svg class="abs" style="left:0;top:0" width="33" height="33" viewBox="0 0 33 33"><text x="5.8" y="7.8" font-size="9.200" fill="#000" font-family="Liberation Sans, sans-serif"><tspan font-weight="bold" letter-spacing="-0.350">β = ?</tspan></text><rect x="13.6" y="9.8" width="3.0" height="21.4" fill="#1fc3d6" stroke="#0d4fa0" stroke-width="1"/><rect x="13.7" y="9.6" width="3" height="1.600" fill="#f5ee00" stroke="#111" stroke-width="0.700"/><rect x="13.7" y="30.2" width="3" height="1.600" fill="#f5ee00" stroke="#111" stroke-width="0.700"/></svg></div>
<div class="abs" style="left:252px;top:135px;background:linear-gradient(#f6f6f6 0,#f4f4f4 78%,#c9c9c9 95%,#9d9d9d 100%);border-right:1px solid #9a9a9a;width:32px;height:33px;"><svg class="abs" style="left:0;top:0" width="33" height="33" viewBox="0 0 33 33"><text x="1.800" y="7.800" font-size="10" font-weight="bold" fill="#1212c4" font-family="Liberation Sans, sans-serif">L<tspan font-size="6.500" dy="1.600">k</tspan><tspan dy="-1.600" dx="1.500">= ?</tspan></text><rect x="15.7" y="9.8" width="3.0" height="21.4" fill="#1fc3d6" stroke="#0d4fa0" stroke-width="1"/><rect x="15.8" y="9.6" width="3" height="1.600" fill="#f5ee00" stroke="#111" stroke-width="0.700"/><rect x="15.8" y="30.2" width="3" height="1.600" fill="#f5ee00" stroke="#111" stroke-width="0.700"/></svg></div>
<div class="abs" style="left:292px;top:135px;background:linear-gradient(#f6f6f6 0,#f4f4f4 78%,#c9c9c9 95%,#9d9d9d 100%);border-right:1px solid #9a9a9a;width:32px;height:33px;"><svg class="abs" style="left:0;top:0" width="33" height="33" viewBox="0 0 33 33"><path d="M5.600 28V1.400H16.500V28M5.600 15.400H27.500V28" fill="none" stroke="#0f5a9c" stroke-width="3"/><path d="M5.600 28V1.400H16.500V28M5.600 15.400H27.500V28" fill="none" stroke="#1fb6cc" stroke-width="1.100"/><path d="M0 28.500H33" stroke="#000" stroke-width="1.200"/><path d="M-1.5 29.0l2.4 3.6M1.1 29.0l2.4 3.6M3.7 29.0l2.4 3.6M6.3 29.0l2.4 3.6M8.9 29.0l2.4 3.6M11.5 29.0l2.4 3.6M14.1 29.0l2.4 3.6M16.7 29.0l2.4 3.6M19.3 29.0l2.4 3.6M21.9 29.0l2.4 3.6M24.5 29.0l2.4 3.6M27.1 29.0l2.4 3.6M29.7 29.0l2.4 3.6" stroke="#000" stroke-width="1" fill="none"/></svg></div>
<div class="abs" style="left:12px;top:228px;background:linear-gradient(#f6f6f6 0,#f4f4f4 78%,#c9c9c9 95%,#9d9d9d 100%);border-right:1px solid #9a9a9a;width:32px;height:33px;"><svg class="abs" style="left:0;top:0" width="33" height="33" viewBox="0 0 33 33"><text x="5.8" y="7.9" font-size="9.200" fill="#000" font-family="Liberation Sans, sans-serif"><tspan font-weight="bold" letter-spacing="-0.350">β = 0</tspan></text><rect x="13.4" y="12.3" width="3.0" height="17.2" fill="#1fc3d6" stroke="#0d4fa0" stroke-width="1"/><path d="M11.2 11.8l-2.8 3.2M21.8 11.8l-2.8 3.2M11.2 14.8l-2.8 3.2M21.8 14.8l-2.8 3.2M11.2 17.8l-2.8 3.2M21.8 17.8l-2.8 3.2M11.2 20.8l-2.8 3.2M21.8 20.8l-2.8 3.2M11.2 23.8l-2.8 3.2M21.8 23.8l-2.8 3.2M11.2 26.8l-2.8 3.2M21.8 26.8l-2.8 3.2" stroke="#8a8a8a" stroke-width="0.900" fill="none"/><path d="M11.6 11.500V30.500M18.600 11.500V30.500" stroke="#b8b8b8" stroke-width="0.800" fill="none"/></svg></div>
<div class="abs" style="left:52px;top:228px;background:linear-gradient(#f6f6f6 0,#f4f4f4 78%,#c9c9c9 95%,#9d9d9d 100%);border-right:1px solid #9a9a9a;width:32px;height:33px;"><svg class="abs" style="left:0;top:0" width="33" height="33" viewBox="0 0 33 33"><text x="3.8" y="7.2" font-size="9.200" fill="#000" font-family="Liberation Sans, sans-serif"><tspan font-weight="bold" letter-spacing="-0.350">β</tspan><tspan font-weight="normal" letter-spacing="-0.250">=0.5</tspan></text><path d="M8.0 9.2l2.0 3.0M10.7 9.2l2.0 3.0M13.4 9.2l2.0 3.0M16.1 9.2l2.0 3.0M18.8 9.2l2.0 3.0" stroke="#000" stroke-width="1" fill="none"/><path d="M6.800 12.500H23.200M6.800 28.200H23.200" stroke="#000" stroke-width="1"/><rect x="13.4" y="13.0" width="3.0" height="15.0" fill="#1fc3d6" stroke="#0d4fa0" stroke-width="1"/><path d="M8.5 28.4l2.4 3.8M11.2 28.4l2.4 3.8M13.9 28.4l2.4 3.8M16.6 28.4l2.4 3.8M19.3 28.4l2.4 3.8" stroke="#000" stroke-width="1" fill="none"/></svg></div>
<div class="abs" style="left:92px;top:228px;background:linear-gradient(#f6f6f6 0,#f4f4f4 78%,#c9c9c9 95%,#9d9d9d 100%);border-right:1px solid #9a9a9a;width:32px;height:33px;"><svg class="abs" style="left:0;top:0" width="33" height="33" viewBox="0 0 33 33"><text x="4.0" y="7.8" font-size="9.200" fill="#000" font-family="Liberation Sans, sans-serif"><tspan font-weight="bold" letter-spacing="-0.350">β</tspan><tspan font-weight="normal" letter-spacing="-0.250">=0.7</tspan></text><path d="M8.6 9.3L12.8 12.5L8.6 15.7Z" fill="#f5ee00" stroke="#222" stroke-width="0.600"/><rect x="13.6" y="11.5" width="3.0" height="16.5" fill="#1fc3d6" stroke="#0d4fa0" stroke-width="1"/><path d="M7 28.200H23" stroke="#000" stroke-width="1"/><path d="M8.5 28.4l2.4 3.8M11.2 28.4l2.4 3.8M13.9 28.4l2.4 3.8M16.6 28.4l2.4 3.8M19.3 28.4l2.4 3.8" stroke="#000" stroke-width="1" fill="none"/></svg></div>
<div class="abs" style="left:131px;top:227px;background:linear-gradient(#c3c3c3 0,#c0c0c0 80%,#a9a9a9 100%);border-left:1px solid #8c8c8c;border-top:1px solid #8c8c8c;width:32px;height:32px;"><svg class="abs" style="left:0;top:0" width="33" height="33" viewBox="1 1 33 33"><text x="4.6" y="7.6" font-size="9.200" fill="#000" font-family="Liberation Sans, sans-serif"><tspan font-weight="bold" letter-spacing="-0.350">β</tspan><tspan font-weight="normal" letter-spacing="-0.250">=1.0</tspan></text><path d="M10.4 9.8L14.6 13.0L10.4 16.2Z" fill="#f5ee00" stroke="#222" stroke-width="0.600"/><path d="M10.4 26.4L14.6 29.6L10.4 32.8Z" fill="#f5ee00" stroke="#222" stroke-width="0.600"/><rect x="15.5" y="11.5" width="3.0" height="18.7" fill="#1fc3d6" stroke="#0d4fa0" stroke-width="1"/></svg></div>
<div class="abs" style="left:172px;top:228px;background:linear-gradient(#f6f6f6 0,#f4f4f4 78%,#c9c9c9 95%,#9d9d9d 100%);border-right:1px solid #9a9a9a;width:32px;height:33px;"><svg class="abs" style="left:0;top:0" width="33" height="33" viewBox="0 0 33 33"><text x="4.8" y="7.8" font-size="9.200" fill="#000" font-family="Liberation Sans, sans-serif"><tspan font-weight="bold" letter-spacing="-0.350">β</tspan><tspan font-weight="normal" letter-spacing="-0.250">=2.0</tspan></text><rect x="13.4" y="9.5" width="3.0" height="17.5" fill="#1fc3d6" stroke="#0d4fa0" stroke-width="1"/><path d="M6.800 27.200H23.200" stroke="#000" stroke-width="1"/><path d="M8.5 27.4l2.4 3.8M11.2 27.4l2.4 3.8M13.9 27.4l2.4 3.8M16.6 27.4l2.4 3.8M19.3 27.4l2.4 3.8" stroke="#000" stroke-width="1" fill="none"/></svg></div>
<div class="abs" style="left:212px;top:228px;background:linear-gradient(#f6f6f6 0,#f4f4f4 78%,#c9c9c9 95%,#9d9d9d 100%);border-right:1px solid #9a9a9a;width:32px;height:33px;"><svg class="abs" style="left:0;top:0" width="33" height="33" viewBox="0 0 33 33"><text x="5.8" y="7.8" font-size="9.200" fill="#000" font-family="Liberation Sans, sans-serif"><tspan font-weight="bold" letter-spacing="-0.350">β = ?</tspan></text><rect x="13.6" y="9.8" width="3.0" height="21.4" fill="#1fc3d6" stroke="#0d4fa0" stroke-width="1"/><rect x="13.7" y="9.6" width="3" height="1.600" fill="#f5ee00" stroke="#111" stroke-width="0.700"/><rect x="13.7" y="30.2" width="3" height="1.600" fill="#f5ee00" stroke="#111" stroke-width="0.700"/></svg></div>
<div class="abs" style="left:252px;top:228px;background:linear-gradient(#f6f6f6 0,#f4f4f4 78%,#c9c9c9 95%,#9d9d9d 100%);border-right:1px solid #9a9a9a;width:32px;height:33px;"><svg class="abs" style="left:0;top:0" width="33" height="33" viewBox="0 0 33 33"><text x="1.800" y="7.800" font-size="10" font-weight="bold" fill="#1212c4" font-family="Liberation Sans, sans-serif">L<tspan font-size="6.500" dy="1.600">k</tspan><tspan dy="-1.600" dx="1.500">= ?</tspan></text><rect x="15.7" y="9.8" width="3.0" height="21.4" fill="#1fc3d6" stroke="#0d4fa0" stroke-width="1"/><rect x="15.8" y="9.6" width="3" height="1.600" fill="#f5ee00" stroke="#111" stroke-width="0.700"/><rect x="15.8" y="30.2" width="3" height="1.600" fill="#f5ee00" stroke="#111" stroke-width="0.700"/></svg></div>
<div class="abs" style="left:292px;top:228px;background:linear-gradient(#f6f6f6 0,#f4f4f4 78%,#c9c9c9 95%,#9d9d9d 100%);border-right:1px solid #9a9a9a;width:32px;height:33px;"><svg class="abs" style="left:0;top:0" width="33" height="33" viewBox="0 0 33 33"><path d="M5.600 28V1.400H16.500V28M5.600 15.400H27.500V28" fill="none" stroke="#0f5a9c" stroke-width="3"/><path d="M5.600 28V1.400H16.500V28M5.600 15.400H27.500V28" fill="none" stroke="#1fb6cc" stroke-width="1.100"/><path d="M0 28.500H33" stroke="#000" stroke-width="1.200"/><path d="M-1.5 29.0l2.4 3.6M1.1 29.0l2.4 3.6M3.7 29.0l2.4 3.6M6.3 29.0l2.4 3.6M8.9 29.0l2.4 3.6M11.5 29.0l2.4 3.6M14.1 29.0l2.4 3.6M16.7 29.0l2.4 3.6M19.3 29.0l2.4 3.6M21.9 29.0l2.4 3.6M24.5 29.0l2.4 3.6M27.1 29.0l2.4 3.6M29.7 29.0l2.4 3.6" stroke="#000" stroke-width="1" fill="none"/></svg></div>
<div class="abs lbl" style="left:11.3px;top:325.0px;letter-spacing:0.105px;">Equivalent uniform moment factor Cm</div>
<div class="abs lbl" style="left:11.3px;top:378.0px;letter-spacing:0.105px;">Equivalent uniform moment factor Cm</div>
<div class="abs inp" style="left:223px;top:320px;border-color:#0078d7"><span style="letter-spacing:-0.706px;margin-right:5px">1.000</span></div>
<div class="abs" style="left:256.0px;top:324px;width:1px;height:15px;background:#000"></div>
<div class="abs inp" style="left:223px;top:373px"><span style="letter-spacing:-0.706px;margin-right:5px">1.000</span></div>
<div class="abs cb" style="left:11px;top:427px"><svg width="11" height="11" viewBox="0 0 11 11" style="display:block"><path d="M1.300 5.400L4.100 8.300L9.700 1.700" fill="none" stroke="#222" stroke-width="1.150"/></svg></div>
<div class="abs lbl" style="left:27.6px;top:426.5px;letter-spacing:-0.081px;">Consider in buckling analysis</div>
<div class="abs cb" style="left:11px;top:449px"></div>
<div class="abs lbl" style="left:27.6px;top:448.5px;letter-spacing:0.010px;">Update the buckling coefficients in the xy plane</div>
<div class="abs cb" style="left:11px;top:471px"></div>
<div class="abs lbl" style="left:27.6px;top:470.5px;letter-spacing:-0.009px;">Update the buckling coefficients in the xz plane</div>
<div class="abs" style="left:0;top:497px;width:433px;height:1px;background:#d4d4d4"></div>
<div class="abs" style="left:0;top:498px;width:433px;height:39px;background:#ececec"></div>
<div class="abs btn" style="left:7px;top:505px;width:65px;height:21px;border:2px solid #0078d7;line-height:22px"><span style="letter-spacing:0.052px">Accept</span></div>
<div class="abs btn" style="left:368px;top:505px"><span style="letter-spacing:-0.277px">Cancel</span></div>
</div>
</body>
</html>
